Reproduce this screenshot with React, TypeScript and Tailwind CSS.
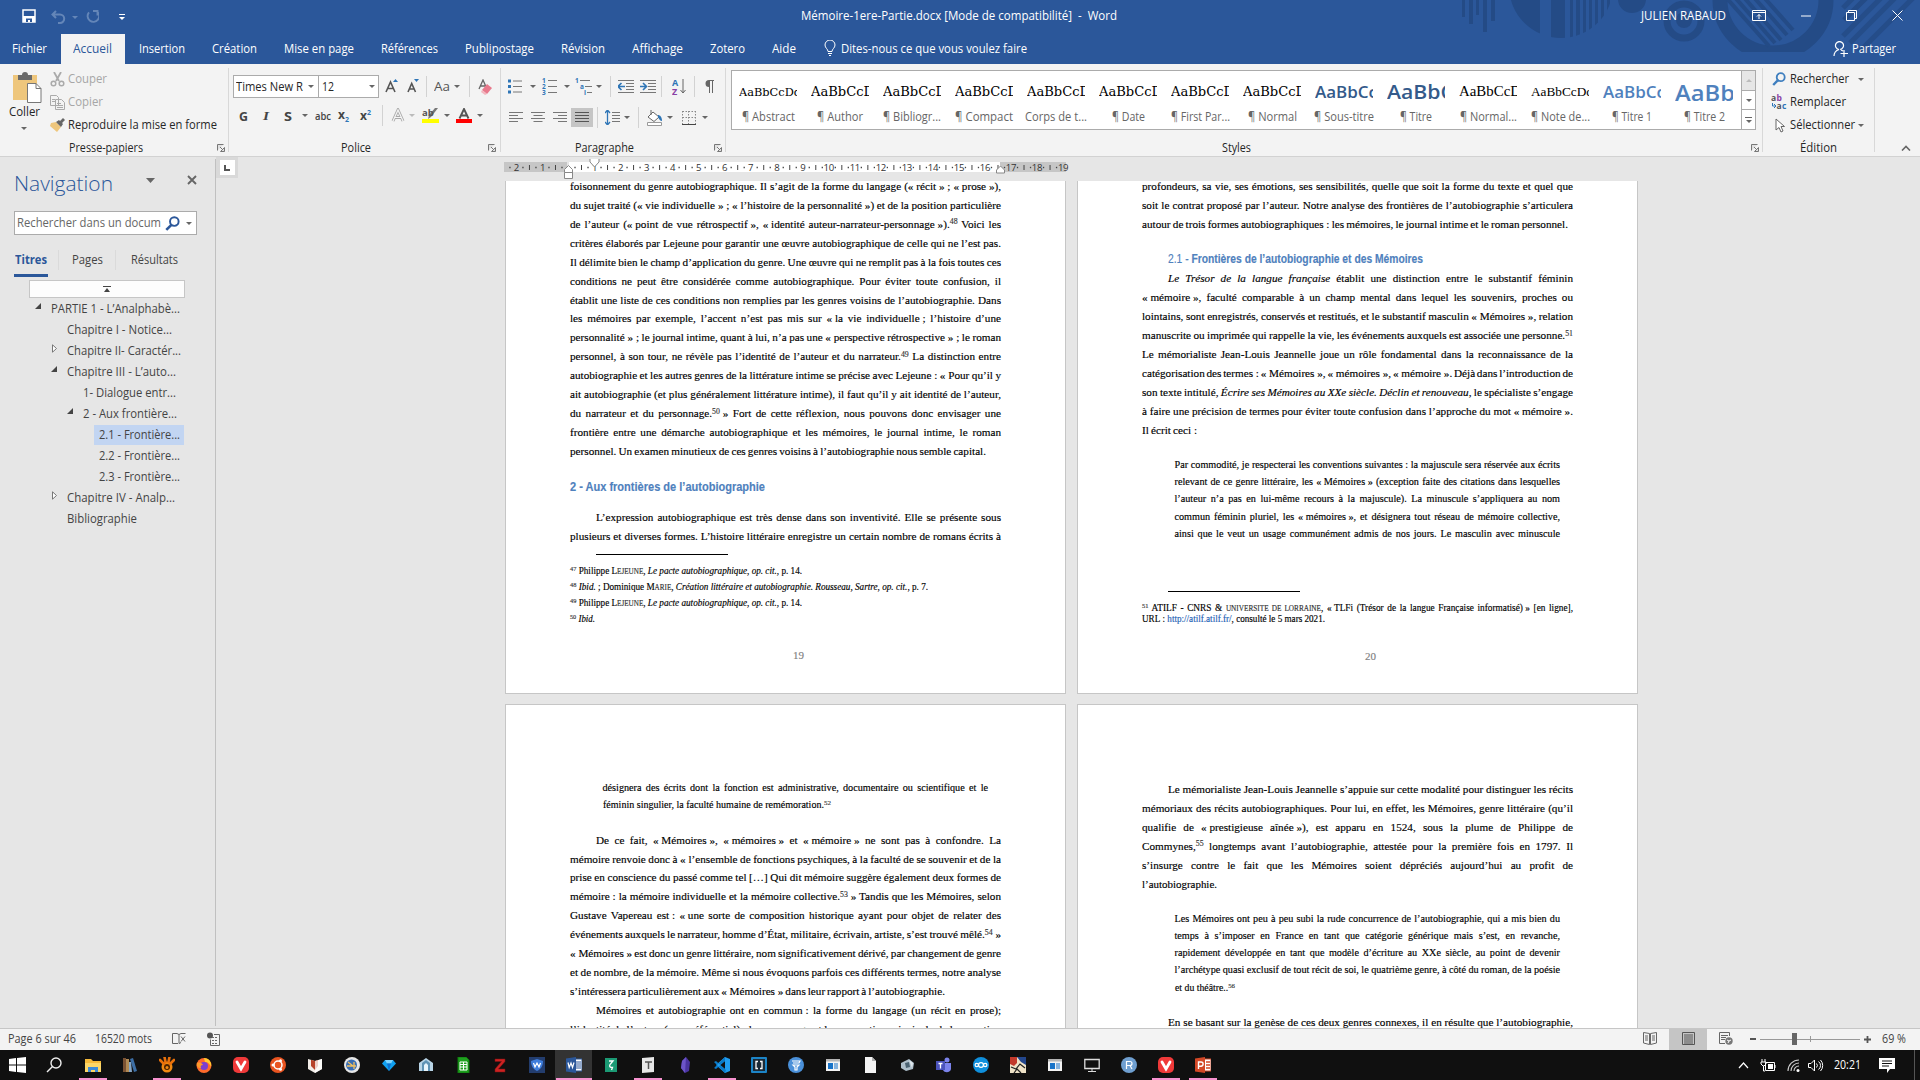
import React, { ReactNode, useLayoutEffect, useRef } from "react";

/* Text run squeezed or stretched to the width given by its box class. */
function Fit({ className = "", children }: { className?: string; children: ReactNode }) {
  const box = useRef<HTMLSpanElement>(null);
  const run = useRef<HTMLSpanElement>(null);
  useLayoutEffect(() => {
    const b = box.current, r = run.current;
    if (!b || !r) return;
    r.style.transform = "none";
    const w = r.getBoundingClientRect().width;
    if (w > 0) r.style.transform = `scaleX(${b.getBoundingClientRect().width / w})`;
  }, []);
  return (
    <span ref={box} className={"block shrink-0 whitespace-nowrap " + className}>
      <span ref={run} className="inline-block origin-left">{children}</span>
    </span>
  );
}

/* Inline marks: *italic*, ^superscript^, {small caps}, [[link]], ~ fixed space. */
function rich(s: string): ReactNode[] {
  return s.split(/(\*[^*]+\*|\^[^^]+\^|\{[^}]+\}|\[\[[^\]]+\]\]|~)/).map((p, i) => {
    if (p === "~") return <span key={i} className="[word-spacing:0px]">{"\u00a0"}</span>;
    if (p.startsWith("[[")) return <span key={i} className="text-[#1f63b5]">{p.slice(2, -2)}</span>;
    if (p[0] === "*" && p.length > 1) return <i key={i}>{rich(p.slice(1, -1))}</i>;
    if (p[0] === "^" && p.length > 1) return <span key={i} className="relative -top-[0.45em] text-[0.7em] leading-none text-[#333]">{p.slice(1, -1)}</span>;
    if (p[0] === "{" && p.length > 1) return <span key={i} className="text-[78%] text-[#333]">{p.slice(1, -1)}</span>;
    return <React.Fragment key={i}>{p}</React.Fragment>;
  });
}

/* Justified line: spare width goes to the spaces between words. */
function Line({ t, className = "" }: { t: string; className?: string }) {
  const box = useRef<HTMLDivElement>(null);
  const run = useRef<HTMLSpanElement>(null);
  useLayoutEffect(() => {
    const b = box.current, r = run.current;
    if (!b || !r) return;
    r.style.wordSpacing = "0px";
    const n = (r.textContent || "").split(" ").length - 1;
    const cs = getComputedStyle(b);
    const free = b.getBoundingClientRect().width - parseFloat(cs.paddingLeft) - r.getBoundingClientRect().width;
    if (n > 0) r.style.wordSpacing = `${free / n}px`;
  }, []);
  return (
    <div ref={box} className={"shrink-0 whitespace-nowrap " + className}>
      <span ref={run}>{rich(t)}</span>
    </div>
  );
}

const B = "h-[18.93px] leading-[18.93px] text-[11.2px]";
const Q = "h-[17.3px] leading-[17.3px] text-[10.2px]";

function Caret({ className = "" }: { className?: string }) {
  return <svg className={"shrink-0 h-[3px] w-[6px] " + className} viewBox="0 0 6 3"><path d="M0 0h6L3 3z" fill="#666" /></svg>;
}
function Sep({ className = "" }: { className?: string }) {
  return <div className={"h-[21px] w-px shrink-0 bg-[#d2d2d2] " + className} />;
}
function Svg({ w, h, className = "", children }: { w: number; h: number; className?: string; children: ReactNode }) {
  return <svg width={w} height={h} viewBox={`0 0 ${w} ${h}`} className={"shrink-0 " + className} fill="none">{children}</svg>;
}
function Launcher({ className = "" }: { className?: string }) {
  return <Svg w={8} h={8} className={className}><path d="M.5 6.500V.5h6M3 3l3 3M7.500 3.500v4h-4z" stroke="#777" fill="#777" fillOpacity=".15" /></Svg>;
}
function Magnifier({ c, s = 14 }: { c: string; s?: number }) {
  return <svg width={s} height={s} viewBox="0 0 14 14" fill="none" className="shrink-0"><circle cx="8.700" cy="5.200" r="4" stroke={c} strokeWidth="1.800" /><path d="M6 8.200L1.200 13" stroke={c} strokeWidth="2.400" /></svg>;
}

function Header() {
  return (
    <div className="relative h-[64px] bg-[#2b579a] text-[12px] text-white">
      <svg className="absolute left-[1455px] top-0" width="465" height="52" viewBox="0 0 465 52" fill="#244b86">
        <path d="M7 0h3v17h-3zM14 0h4v24h-4zM21 0h3v15h-3zM28 0h4v32h-4zM36 0h4v21h-4z" />
        <clipPath id="disc"><circle cx="106" cy="-14" r="52" /></clipPath>
        <g clipPath="url(#disc)"><path d="M54 0h31v52H54zM96 0h14v52H96zM115 0h3v52h-3zM121 0h4v52h-4zM128 0h3v52h-3zM134 0h3v52h-3zM140 0h3v52h-3zM146 0h3v52h-3zM152 0h3v52h-3z" /></g>
        <circle cx="177" cy="-1" r="14" />
        <circle cx="229" cy="21" r="17" fill="none" stroke="#244b86" strokeWidth="7" />
        <circle cx="229" cy="20" r="8" />
        <circle cx="318" cy="0" r="53" fill="none" stroke="#244b86" strokeWidth="15" />
        <g stroke="#244b86" strokeWidth="4"><path d="M268 -6l46 52M277 -6l43 49M286 -6l40 46M296 -6l36 41M306 -6l32 36" /></g>
        <g stroke="#244b86" strokeWidth="5"><path d="M388 36L432 -8M388 8L404 -8M395 43L446 -8M404 52L464 -8" opacity=".8" /><path d="M389 20L417 -8" /></g>
      </svg>
      <div className="relative flex h-[34px] items-center pt-[0px]">
        <Svg w={15} h={15} className="ml-[22px] -mt-[1px]"><path d="M1 1h12v12H1z" stroke="#fff" strokeWidth="1.500" /><path d="M1 7h12v6H1z" fill="#fff" /><path d="M4 9.500h6V13H4z" fill="#2b579a" /><path d="M6 11h2v2H6z" fill="#fff" /></Svg>
        <Svg w={15} h={14} className="ml-[14px] -mt-[1px]"><path d="M5 1L1.500 4.500L5 8M1.500 4.500H9a4.200 4.200 0 010 8.400H7" stroke="#6486b8" strokeWidth="2" /></Svg>
        <svg className="ml-[6px] h-[3px] w-[6px]" viewBox="0 0 6 3"><path d="M0 0h6L3 3z" fill="#6486b8" /></svg>
        <Svg w={14} h={14} className="ml-[7px] -mt-[1px]"><path d="M6 1H1.500v4.500M2 1.500A5.800 5.800 0 1010 2.300" stroke="#6486b8" strokeWidth="1.900" transform="translate(14 0) scale(-1 1)" /></Svg>
        <Svg w={6} h={7} className="ml-[20px]"><path d="M0 .5h6" stroke="#fff" /><path d="M0 3h6L3 6z" fill="#fff" /></Svg>
        <Fit className="ml-[676px] w-[316px] -mt-[2px]">Mémoire-1ere-Partie.docx [Mode de compatibilité]&nbsp; -&nbsp; Word</Fit>
        <Fit className="ml-[524px] w-[85px] -mt-[2px]">JULIEN RABAUD</Fit>
        <Svg w={14} h={11} className="ml-[26px] -mt-[3px]"><path d="M.5.5h13v10H.5zM.5 2.500h13M7 9V4.500M5 6.500l2-2 2 2" stroke="#fff" /></Svg>
        <Svg w={10} h={2} className="ml-[35px] -mt-[3px]"><path d="M0 1h10" stroke="#fff" /></Svg>
        <Svg w={11} h={11} className="ml-[35px] -mt-[3px]"><path d="M.5 2.500h8v8h-8zM2.500 2.500v-2h8v8h-2" stroke="#fff" /></Svg>
        <Svg w={11} h={11} className="ml-[35px] -mt-[3px]"><path d="M.5.5l10 10M10.500.5l-10 10" stroke="#fff" /></Svg>
      </div>
      <div className="relative flex h-[30px] items-center">
        <Fit className="ml-[12px] w-[35px]">Fichier</Fit>
        <div className="ml-[14px] flex h-[30px] w-[64px] items-center bg-[#f3f3f3] pl-[12px] text-[#2b579a]"><Fit className="w-[39px]">Accueil</Fit></div>
        <Fit className="ml-[14px] w-[46px]">Insertion</Fit>
        <Fit className="ml-[27px] w-[45px]">Création</Fit>
        <Fit className="ml-[27px] w-[70px]">Mise en page</Fit>
        <Fit className="ml-[27px] w-[57px]">Références</Fit>
        <Fit className="ml-[27px] w-[69px]">Publipostage</Fit>
        <Fit className="ml-[27px] w-[44px]">Révision</Fit>
        <Fit className="ml-[27px] w-[51px]">Affichage</Fit>
        <Fit className="ml-[27px] w-[35px]">Zotero</Fit>
        <Fit className="ml-[27px] w-[24px]">Aide</Fit>
        <Svg w={12} h={16} className="ml-[28px] -mt-[2px]"><path d="M4 11.500C4 9 1 8 1 5a5 5 0 0110 0c0 3-3 4-3 6.500zM4 13.500h4M5 15.500h2" stroke="#fff" /></Svg>
        <Fit className="ml-[5px] w-[186px]">Dites-nous ce que vous voulez faire</Fit>
        <Svg w={15} h={16} className="ml-[806px]"><path d="M7 8.500a4 4 0 10-1 0C3 9.500 1 12 1 15M8 9l2 1M11 9v7M7.500 12.500H15" stroke="#fff" strokeWidth="1.200" /></Svg>
        <Fit className="ml-[4px] w-[44px]">Partager</Fit>
      </div>
    </div>
  );
}

const TNR = "font-['Liberation_Serif','Times_New_Roman',serif]";
const styles: [string, string, string, string][] = [
  ["AaBbCcDd", "w-[62px] font-['DejaVu_Serif',serif] text-[11.5px] text-black", "¶ Abstract", "w-[53px]"],
  ["AaBbCcD", "w-[63px] font-['DejaVu_Serif',serif] text-[13px] text-black", "¶ Author", "w-[46px]"],
  ["AaBbCcD", "w-[63px] font-['DejaVu_Serif',serif] text-[13px] text-black", "¶ Bibliogr...", "w-[58px]"],
  ["AaBbCcD", "w-[63px] font-['DejaVu_Serif',serif] text-[13px] text-black", "¶ Compact", "w-[58px]"],
  ["AaBbCcD", "w-[63px] font-['DejaVu_Serif',serif] text-[13px] text-black", "Corps de t...", "w-[62px]"],
  ["AaBbCcD", "w-[63px] font-['DejaVu_Serif',serif] text-[13px] text-black", "¶ Date", "w-[33px]"],
  ["AaBbCcD", "w-[63px] font-['DejaVu_Serif',serif] text-[13px] text-black", "¶ First Par...", "w-[59px]"],
  ["AaBbCcD", "w-[63px] font-['DejaVu_Serif',serif] text-[13px] text-black", "¶ Normal", "w-[49px]"],
  ["AaBbCc", "w-[62px] text-[16px] font-semibold text-[#345a8a]", "¶ Sous-titre", "w-[60px]"],
  ["AaBbC", "w-[67px] text-[19px] font-semibold text-[#345a8a]", "¶ Titre", "w-[32px]"],
  ["AaBbCcD", "w-[62px] font-['Liberation_Serif',serif] text-[14px] text-black", "¶ Normal...", "w-[57px]"],
  ["AaBbCcDd", "w-[62px] font-['Liberation_Serif',serif] text-[13px] text-black", "¶ Note de...", "w-[59px]"],
  ["AaBbCc", "w-[62px] text-[17px] font-semibold text-[#4f81bd]", "¶ Titre 1", "w-[40px]"],
  ["AaBbC", "w-[75px] text-[22px] font-semibold text-[#4f81bd]", "¶ Titre 2", "w-[41px]"],
];

function Lines({ d, w = 15 }: { d: string; w?: number }) {
  return <Svg w={w} h={13}><path d={d} stroke="#777" /></Svg>;
}

function Ribbon() {
  return (
    <div className="flex h-[93px] border-b border-[#d2d2d2] bg-[#f3f3f3] pt-[4px] text-[12px] text-[#262626]">
      {/* Clipboard */}
      <div className="flex h-[84px] w-[229px] flex-col border-r border-[#d8d8d8] [&>*]:shrink-0">
        <div className="flex h-[72px]">
          <div className="flex w-[50px] flex-col pl-[9px]">
            <Svg w={30} h={31} className="ml-[4px] mt-[4px]"><path d="M0 3h24v25H0z" fill="#eec67c" /><path d="M5 3h4a3 3 0 016 0h4v5H5z" fill="#6a6a6a" /><path d="M14.500 11.500h8.500l5 5v14H14.500z" fill="#fff" stroke="#777" /><path d="M23 11.500v5h5" stroke="#777" /></Svg>
            <Fit className="mt-[1px] w-[31px]">Coller</Fit>
            <Caret className="ml-[12px] mt-[7px]" />
          </div>
          <div className="flex flex-col">
            <div className="flex h-[22px] items-center text-[#a6a6a6]">
              <Svg w={15} h={15}><path d="M4 0l5 9M11 0L6 9" stroke="#aaa" strokeWidth="1.800" /><circle cx="3.500" cy="11.500" r="2.300" stroke="#aaa" strokeWidth="1.500" /><circle cx="11.500" cy="11.500" r="2.300" stroke="#aaa" strokeWidth="1.500" /></Svg>
              <Fit className="ml-[3px] w-[39px]">Couper</Fit>
            </div>
            <div className="flex h-[24px] items-center text-[#a6a6a6]">
              <Svg w={15} h={15}><path d="M.5.5h6l2 2v8h-8zM5.500 4.500h6l3 3v7h-9zM7 8.500h4M7 10.500h6M7 12.500h6M2 4.500h3M2 6.500h3" stroke="#aaa" fill="#f3f3f3" /></Svg>
              <Fit className="ml-[3px] w-[35px]">Copier</Fit>
            </div>
            <div className="flex h-[22px] items-center">
              <Svg w={15} h={14}><path d="M1 5l5-1 5 5-4 5L0 8z" fill="#eec67c" /><path d="M6 4l3-2 4 4-2 3zM10 3l3-3 2 2-3 3z" fill="#666" /></Svg>
              <Fit className="ml-[3px] w-[149px]">Reproduire la mise en forme</Fit>
            </div>
          </div>
        </div>
        <div className="flex h-[16px] items-center"><Fit className="ml-[69px] w-[74px]">Presse-papiers</Fit><Launcher className="ml-[74px]" /></div>
      </div>
      {/* Font */}
      <div className="flex h-[84px] w-[272px] flex-col border-r border-[#d8d8d8] pl-[4px] pt-[7px] [&>*]:shrink-0">
        <div className="flex h-[23px] items-center">
          <div className="flex h-[23px] w-[86px] items-center border border-[#ababab] bg-white"><Fit className="ml-[2px] w-[67px]">Times New R</Fit><Caret className="ml-[5px]" /></div>
          <div className="-ml-px flex h-[23px] w-[61px] items-center border border-[#ababab] bg-white"><Fit className="ml-[3px] w-[12px]">12</Fit><Caret className="ml-[35px]" /></div>
          <Svg w={14} h={15} className="-mt-[2px] ml-[6px]"><path d="M1 14L5.500 4L10 14M2.500 10.500h6" stroke="#555" strokeWidth="1.600" /><path d="M8 4h5l-2.500-3z" fill="#2e75b6" /></Svg>
          <Svg w={13} h={15} className="-mt-[2px] ml-[8px]"><path d="M1 14L4.700 5.500L8.500 14M2.500 11h4.500" stroke="#555" strokeWidth="1.600" /><path d="M7 1h5L9.500 4z" fill="#2e75b6" /></Svg>
          <Sep className="ml-[6px]" />
          <Fit className="-mt-[1px] ml-[7px] w-[16px] text-[13px] text-[#555]">Aa</Fit><Caret className="ml-[4px]" />
          <Sep className="ml-[9px]" />
          <Svg w={15} h={16} className="ml-[8px]"><path d="M1 10L5 1l4 9M2.500 7h5" stroke="#666" strokeWidth="1.300" /><path d="M9 5l5 4-5 6-5-4z" fill="#e8798c" /><path d="M4 11l5 4-2 1-4-3z" fill="#f3b5be" /></Svg>
        </div>
        <div className="mt-[8px] flex h-[19px] items-center text-[13px] text-[#444]">
          <Fit className="ml-[6px] w-[9px] font-bold">G</Fit>
          <Fit className={"ml-[15px] w-[6px] font-bold italic " + TNR}>I</Fit>
          <Fit className="ml-[15px] w-[8px] font-bold underline">S</Fit>
          <Caret className="ml-[10px]" />
          <Fit className="ml-[7px] w-[16px] text-[11px] font-semibold line-through">abc</Fit>
          <div className="ml-[7px] flex w-[14px] text-[12px] font-bold">x<span className="mt-[8px] text-[7px] leading-[10px] text-[#2e75b6]">2</span></div>
          <div className="ml-[8px] flex w-[14px] text-[12px] font-bold">x<span className="mt-[0px] text-[7px] leading-[10px] text-[#2e75b6]">2</span></div>
          <Sep className="ml-[8px]" />
          <Svg w={14} h={15} className="ml-[8px]"><path d="M2 13L7 2l5 11M4 9.500h6" stroke="#aaa" strokeWidth="3" /><path d="M2 13L7 2l5 11M4 9.500h6" stroke="#f5f5f5" strokeWidth="1.200" /></Svg>
          <svg className="ml-[4px] h-[3px] w-[6px]" viewBox="0 0 6 3"><path d="M0 0h6L3 3z" fill="#bbb" /></svg>
          <div className="ml-[7px] flex w-[17px] flex-col">
            <Svg w={17} h={11}><path d="M16 0L9 9l-3 2 1-4L13 0z" fill="#777" /><text x="0" y="8" fontSize="9.500" fontWeight="700" fill="#555" fontFamily="Open Sans">ab</text></Svg>
            <div className="h-[4px] bg-[#ffff00]" />
          </div>
          <Caret className="ml-[5px]" />
          <div className="ml-[6px] flex w-[16px] flex-col items-center">
            <Svg w={12} h={11}><path d="M1.500 10.500L6 1l4.500 9.500M3 7.500h6" stroke="#555" strokeWidth="1.900" /></Svg>
            <div className="h-[4px] w-[16px] bg-[#ff0000]" />
          </div>
          <Caret className="ml-[5px]" />
        </div>
        <div className="mt-[15px] flex h-[16px] items-center"><Fit className="ml-[108px] w-[30px]">Police</Fit><Launcher className="ml-[117px]" /></div>
      </div>
      {/* Paragraph */}
      <div className="flex h-[84px] w-[225px] flex-col border-r border-[#d8d8d8] pt-[7px] [&>*]:shrink-0">
        <div className="flex h-[23px] items-center">
          <Svg w={14} h={15} className="ml-[7px]"><path d="M0 2h3M0 7.500h3M0 13h3" stroke="#2e75b6" strokeWidth="3" /><path d="M5 2h9M5 7.500h9M5 13h9" stroke="#777" /></Svg><Caret className="ml-[8px]" />
          <Svg w={15} h={17} className="ml-[6px]"><text x="0" y="5" fontSize="6.500" fontWeight="700" fill="#2e75b6">1</text><text x="0" y="11" fontSize="6.500" fontWeight="700" fill="#2e75b6">2</text><text x="0" y="17" fontSize="6.500" fontWeight="700" fill="#2e75b6">3</text><path d="M6 2.500h9M6 8.500h9M6 14.500h9" stroke="#777" /></Svg><Caret className="ml-[7px]" />
          <Svg w={18} h={17} className="ml-[5px]"><text x="0" y="5" fontSize="6.500" fontWeight="700" fill="#2e75b6">1</text><text x="5" y="11" fontSize="6.500" fontWeight="700" fill="#2e75b6">a</text><text x="9" y="17" fontSize="6.500" fontWeight="700" fill="#2e75b6">i</text><path d="M5 2.500h10M10 8.500h7M12 14.500h5" stroke="#777" /></Svg><Caret className="ml-[3px]" />
          <Sep className="ml-[8px]" />
          <Svg w={16} h={13} className="ml-[7px]"><path d="M0 .5h16M8 3.500h8M8 6.500h8M8 9.500h8M0 12.500h16" stroke="#777" /><path d="M0 6.500h7M3.500 3L0 6.500 3.500 10" stroke="#2e75b6" strokeWidth="1.600" /></Svg>
          <Svg w={16} h={13} className="ml-[6px]"><path d="M0 .5h16M8 3.500h8M8 6.500h8M8 9.500h8M0 12.500h16" stroke="#777" /><path d="M0 6.500h6M3 3l3.500 3.500L3 10" stroke="#2e75b6" strokeWidth="1.600" /></Svg>
          <Sep className="ml-[5px]" />
          <Svg w={15} h={17} className="ml-[10px]"><text x="0" y="8" fontSize="9" fontWeight="700" fill="#2e75b6">A</text><text x="0" y="16.500" fontSize="9" fontWeight="700" fill="#8a3fa5">Z</text><path d="M11 1v14M8.500 12l2.500 3 2.500-3" stroke="#666" /></Svg>
          <Sep className="ml-[7px]" />
          <Svg w={10} h={13} className="ml-[9px]"><path d="M5 0h5v1H5zM5 0v7a3.500 3.500 0 010-7z" fill="#666" /><path d="M5.500 0v13M8.500 0v13" stroke="#666" /></Svg>
        </div>
        <div className="mt-[9px] flex h-[21px] items-center pl-[8px]">
          <Lines d="M0 1.500h14M0 4.500h9M0 7.500h14M0 10.500h9" />
          <div className="w-[7px]" /><Lines d="M0 1.500h14M2.500 4.500h9M0 7.500h14M2.500 10.500h9" />
          <div className="w-[7px]" /><Lines d="M0 1.500h14M5 4.500h9M0 7.500h14M5 10.500h9" />
          <div className="ml-[3px] flex h-[19px] w-[22px] items-center justify-center bg-[#c5c5c5]"><Svg w={14} h={13}><path d="M0 1.500h14M0 4.500h14M0 7.500h14M0 10.500h14" stroke="#555" /></Svg></div>
          <Sep className="ml-[4px]" />
          <Svg w={15} h={15} className="ml-[7px]"><path d="M2.500 0v15M0 3l2.500-3L5 3M0 12l2.500 3L5 12" stroke="#2e75b6" strokeWidth="1.300" /><path d="M7 2.500h8M7 5.500h8M7 8.500h8M7 11.500h8" stroke="#777" /></Svg><Caret className="ml-[4px]" />
          <Sep className="ml-[8px]" />
          <Svg w={17} h={16} className="ml-[7px]"><path d="M2 7l5-5 6 5-5 4.500zM5 5V0" stroke="#666" fill="#fff" /><path d="M12 5c2 0 4 2 4 6-2 0-3-2-4-4z" fill="#2e75b6" /><path d="M1.500 12.500h14v3h-14z" stroke="#999" fill="#fff" /></Svg><Caret className="ml-[4px]" />
          <Svg w={14} h={14} className="ml-[9px]"><path d="M.5.5h13M.5 6.500h13M.5 0v13M6.500 0v13M13.500 0v13" stroke="#888" strokeDasharray="1.500 1.500" /><path d="M0 13.500h14" stroke="#444" /></Svg><Caret className="ml-[6px]" />
        </div>
        <div className="mt-[12px] flex h-[16px] items-center"><Fit className="ml-[74px] w-[59px]">Paragraphe</Fit><Launcher className="ml-[80px]" /></div>
      </div>
      {/* Styles */}
      <div className="flex h-[84px] w-[1037px] flex-col border-r border-[#d8d8d8] pl-[5px] pt-[2px] [&>*]:shrink-0">
        <div className="flex h-[60px] w-[1025px] border border-[#ababab] bg-white">
          <div className="flex w-[1009px]">
            {styles.map(([sample, sc, label, lc], i) => (
              <div key={i} className="flex w-[72.01px] shrink-0 flex-col items-center pt-[7px]">
                <div className="flex h-[28px] w-[58px] items-center overflow-hidden"><Fit className={sc}>{sample}</Fit></div>
                <Fit className={"mt-[3px] text-[#666] " + lc}>{label}</Fit>
              </div>
            ))}
          </div>
          <div className="flex w-[14px] flex-col border-l border-[#ababab]">
            <div className="flex h-[20px] items-center justify-center border-b border-[#ababab] bg-[#e6e6e6]"><svg className="h-[3px] w-[6px] rotate-180" viewBox="0 0 6 3"><path d="M0 0h6L3 3z" fill="#bbb" /></svg></div>
            <div className="flex h-[19px] items-center justify-center border-b border-[#ababab]"><Caret /></div>
            <div className="flex h-[19px] flex-col items-center justify-center gap-[2px]"><div className="h-px w-[7px] bg-[#666]" /><Caret /></div>
          </div>
        </div>
        <div className="mt-[10px] flex h-[16px] items-center"><Fit className="ml-[491px] w-[29px]">Styles</Fit><Launcher className="ml-[500px]" /></div>
      </div>
      {/* Editing */}
      <div className="flex h-[84px] w-[112px] flex-col border-r border-[#d8d8d8] [&>*]:shrink-0">
        <div className="flex h-[22px] items-center pl-[9px]"><Magnifier c="#3f7fbf" /><Fit className="ml-[4px] w-[59px]">Rechercher</Fit><Caret className="ml-[9px]" /></div>
        <div className="flex h-[24px] items-center pl-[8px]">
          <Svg w={16} h={16}><text x="0" y="6.500" fontSize="8.500" fontWeight="700" fill="#555">a</text><text x="5.500" y="6.500" fontSize="8.500" fontWeight="700" fill="#8a3fa5">b</text><text x="5.500" y="15" fontSize="8.500" fontWeight="700" fill="#555">a</text><text x="11" y="15" fontSize="8.500" fontWeight="700" fill="#2e75b6">c</text><path d="M1.500 9v3h3M3 10l2 2-2 2" stroke="#2e75b6" /></Svg>
          <Fit className="ml-[3px] w-[56px]">Remplacer</Fit>
        </div>
        <div className="flex h-[22px] items-center pl-[12px]"><Svg w={10} h={15}><path d="M1 1v11l3-2.500 2 4.500 2-1-2-4.500h3.500z" stroke="#666" fill="#fff" /></Svg><Fit className="ml-[5px] w-[65px]">Sélectionner</Fit><Caret className="ml-[3px]" /></div>
        <div className="mt-[4px] flex h-[16px] items-center"><Fit className="ml-[37px] w-[37px]">Édition</Fit></div>
      </div>
      <Svg w={10} h={6} className="ml-[26px] mt-[77px]"><path d="M1 5.500l4-4 4 4" stroke="#666" strokeWidth="1.600" /></Svg>
    </div>
  );
}

const tree: [string, string, string, string][] = [
  ["open", "pl-[35px]", "w-[129px]", "PARTIE 1 - L’Analphabè..."],
  ["", "pl-[51px]", "w-[105px]", "Chapitre I - Notice..."],
  ["closed", "pl-[51px]", "w-[114px]", "Chapitre II- Caractér..."],
  ["open", "pl-[51px]", "w-[109px]", "Chapitre III - L’auto..."],
  ["", "pl-[67px]", "w-[93px]", "1- Dialogue entr..."],
  ["open", "pl-[67px]", "w-[94px]", "2 - Aux frontière..."],
  ["sel", "pl-[83px]", "w-[81px]", "2.1 - Frontière..."],
  ["", "pl-[83px]", "w-[81px]", "2.2 - Frontière..."],
  ["", "pl-[83px]", "w-[81px]", "2.3 - Frontière..."],
  ["closed", "pl-[51px]", "w-[108px]", "Chapitre IV - Analp..."],
  ["", "pl-[51px]", "w-[70px]", "Bibliographie"],
];

function Navigation() {
  return (
    <div className="mt-[2px] flex h-[867px] w-[216px] shrink-0 flex-col border-r border-[#c0c0c0] text-[12px] text-[#444]">
      <div className="flex h-[48px] items-center">
        <Fit className="ml-[14px] w-[99px] text-[21px] font-light text-[#2b579a]">Navigation</Fit>
        <svg className="-mt-[6px] ml-[33px] h-[5px] w-[9px]" viewBox="0 0 9 5"><path d="M0 0h9L4.500 5z" fill="#666" /></svg>
        <Svg w={10} h={10} className="-mt-[6px] ml-[32px]"><path d="M1 1l8 8M9 1L1 9" stroke="#666" strokeWidth="1.900" /></Svg>
      </div>
      <div className="ml-[14px] mt-[4px] flex h-[24px] w-[183px] items-center border border-[#ababab] bg-white text-[#666]">
        <Fit className="ml-[2px] w-[144px]">Rechercher dans un docum</Fit>
        <div className="ml-[4px]"><Magnifier c="#2b579a" s={15} /></div><Caret className="ml-[6px]" />
      </div>
      <div className="mt-[13px] flex h-[24px] items-center">
        <Fit className="ml-[15px] w-[32px] font-bold text-[#2b579a]">Titres</Fit>
        <div className="ml-[11px] h-[20px] w-px bg-[#dadada]" />
        <Fit className="ml-[13px] w-[31px]">Pages</Fit>
        <div className="ml-[12px] h-[20px] w-px bg-[#dadada]" />
        <Fit className="ml-[15px] w-[47px]">Résultats</Fit>
      </div>
      <div className="ml-[14px] mt-[2px] h-[3px] w-[34px] bg-[#2b579a]" />
      <div className="ml-[29px] mt-[3px] flex h-[18px] w-[156px] items-center justify-center border border-[#c6c6c6] bg-[#fdfdfd]">
        <Svg w={8} h={6}><path d="M0 .5h8" stroke="#444" /><path d="M1 6L4 2l3 4z" fill="#444" /></Svg>
      </div>
      <div className="flex flex-col">
        {tree.map(([k, pl, w, t]) => (
          <div key={t} className={"flex h-[21px] items-center " + pl}>
            {k === "open" && <Svg w={7} h={7} className="-mt-[4px]"><path d="M6 0v6H0z" fill="#444" /></Svg>}
            {k === "closed" && <Svg w={7} h={9} className="-mt-[4px]"><path d="M1.500.8v7.400L5.500 4.500z" stroke="#777" fill="#fff" /></Svg>}
            {(k === "" || k === "sel") && <div className="w-[7px]" />}
            {k === "sel" ? <div className="ml-[4px] flex h-[20px] w-[90px] items-center bg-[#c2d5f2] pl-[5px]"><Fit className={w}>{t}</Fit></div> : <Fit className={"ml-[9px] " + w}>{t}</Fit>}
          </div>
        ))}
      </div>
    </div>
  );
}

function Ruler() {
  const p = 26.03, zero = 64.5;
  const nums = [-2, -1, ...Array.from({ length: 19 }, (_, i) => i + 1)];
  const marks = Array.from({ length: 85 }, (_, i) => i - 9);
  return (
    <svg className="ml-[504px] mt-[2px] block" width="566" height="22" viewBox="0 0 566 22">
      <path d="M0 3h63v10H0zM496 3h66v10h-66z" fill="#c6c6c6" /><path d="M65 3h431v10H65z" fill="#fff" />
      {marks.map((q) => {
        const x = zero + (q * p) / 4;
        if (q % 4 === 0 || x < 0 || x > 554) return null;
        return q % 2 === 0 ? <path key={q} d={`M${x} 6v5`} stroke="#444" /> : <path key={q} d={`M${x} 7.800v1.400`} stroke="#444" strokeWidth="1.300" />;
      })}
      {nums.map((n) => <text key={n} x={zero + n * p} y="12" textAnchor="middle" fontSize="9.600" letterSpacing="-.3" fill="#333" fontFamily="Open Sans">{Math.abs(n)}</text>)}
      <path d="M86 -1h9v4l-4.500 5L86 3z" fill="#fff" stroke="#888" />
      <path d="M60.500 13.500v-3l4-4 4 4v9h-8zM60.500 13.500h8M492.500 14v-3l4-4 4 4v3z" fill="#fff" stroke="#888" />
    </svg>
  );
}

function Page({ top = false, children }: { top?: boolean; children: ReactNode }) {
  return (
    <div className={"w-[561px] shrink-0 overflow-hidden border-x border-[#c6c6c6] bg-white text-black [-webkit-text-stroke:0.15px] " + TNR + (top ? " h-[513px] border-b" : " h-[325px] border-t")}>
      <div className="ml-[64px] flex w-[431px] flex-col">{children}</div>
    </div>
  );
}

function Body({ lines, className = "" }: { lines: string[]; className?: string }) {
  return <div className={"flex flex-col " + className}>{lines.map((t, i) => <Line key={i} t={t} className={B} />)}</div>;
}
function Quote({ lines, className = "" }: { lines: string[]; className?: string }) {
  return <div className={"ml-[32.5px] flex w-[385.5px] flex-col " + className}>{lines.map((t, i) => <Line key={i} t={t} className={Q} />)}</div>;
}

function Documents() {
  return (
    <div className="flex h-[847px] flex-col gap-[10px] overflow-hidden pl-[289px]">
      <div className="flex gap-[11px]">
        <Page top>
          <Body className="-mt-[4px]" lines={[
            "foisonnement du genre autobiographique. Il s’agit de la forme du langage («~récit~»~; «~prose~»),",
            "du sujet traité («~vie individuelle~»~; «~l’histoire de la personnalité~») et de la position particulière",
            "de l’auteur («~point de vue rétrospectif~», «~identité auteur-narrateur-personnage~»).^48^ Voici les",
            "critères élaborés par Lejeune pour garantir une œuvre autobiographique de celle qui ne l’est pas.",
            "Il délimite bien le champ d’application du genre. Une œuvre qui ne remplit pas à la fois toutes ces",
            "conditions ne peut être considérée comme autobiographique. Pour éviter toute confusion, il",
            "établit une liste de ces conditions non remplies par les genres voisins de l’autobiographie. Dans",
            "les mémoires par exemple, l’accent n’est pas mis sur «~la vie individuelle~; l’histoire d’une",
            "personnalité~»~; le journal intime, quant à lui, n’a pas une «~perspective rétrospective~»~; le roman",
            "personnel, à son tour, ne révèle pas l’identité de l’auteur et du narrateur.^49^ La distinction entre",
            "autobiographie et les autres genres de la littérature intime se précise avec Lejeune~: «~Pour qu’il y",
            "ait autobiographie (et plus généralement littérature intime), il faut qu’il y ait identité de l’auteur,",
            "du narrateur et du personnage.^50^~» Fort de cette réflexion, nous pouvons donc envisager une",
            "frontière entre une démarche autobiographique et les mémoires, le journal intime, le roman",
          ]} />
          <Line t="personnel. Un examen minutieux de ces genres voisins à l’autobiographie nous semble capital." className={B + " w-[416px]"} />
          <div className="mt-[17px] h-[18px] font-['Liberation_Sans',Arial,sans-serif] text-[12px] font-bold leading-[18px] text-[#4f81bd]"><Fit className="w-[195px]">2 - Aux frontières de l’autobiographie</Fit></div>
          <Line t="L’expression autobiographique est très dense dans son inventivité. Elle se présente sous" className={B + " mt-[12px] pl-[26px]"} />
          <Line t="plusieurs et diverses formes. L’histoire littéraire enregistre un certain nombre de romans écrits à" className={B} />
          <div className="ml-[26px] mt-[8px] h-px w-[132px] bg-black" />
          <div className="mt-[8px] flex flex-col text-[9.5px] leading-[16px]">
            <Fit className="h-[16px] w-[232px]">{rich("^47^ Philippe L{EJEUNE}, *Le pacte autobiographique*, *op. cit.*, p. 14.")}</Fit>
            <Fit className="h-[16px] w-[358px]">{rich("^48^ *Ibid.* ; Dominique M{ARIE}, *Création littéraire et autobiographie. Rousseau, Sartre*, *op. cit.*, p. 7.")}</Fit>
            <Fit className="h-[16px] w-[232px]">{rich("^49^ Philippe L{EJEUNE}, *Le pacte autobiographique*, *op. cit.*, p. 14.")}</Fit>
            <Fit className="h-[16px] w-[25px]">{rich("^50^ *Ibid.*")}</Fit>
          </div>
          <div className="ml-[223px] mt-[19px] text-[11px] leading-[18px] text-[#7f7f7f]">19</div>
        </Page>
        <Page top>
          <Body className="-mt-[4px]" lines={[
            "profondeurs, sa vie, ses émotions, ses sensibilités, quelle que soit la forme du texte et quel que",
            "soit le contrat proposé par l’auteur. Notre analyse des frontières de l’autobiographie s’articulera",
          ]} />
          <Line t="autour de trois formes autobiographiques~: les mémoires, le journal intime et le roman personnel." className={B + " w-[426px]"} />
          <div className="mt-[16px] h-[18px] pl-[26px] font-['Liberation_Sans',Arial,sans-serif] text-[12px] leading-[18px] text-[#4f81bd]"><Fit className="w-[255px]">2.1 - <b>Frontières de l’autobiographie et des Mémoires</b></Fit></div>
          <Line t="*Le Trésor de la langue française* établit une distinction entre le substantif féminin" className={B + " mt-[1.7px] pl-[26px]"} />
          <Body lines={[
            "«~mémoire~», faculté comparable à un champ mental dans lequel les souvenirs, proches ou",
            "lointains, sont enregistrés, conservés et restitués, et le substantif masculin «~Mémoires~», relation",
            "manuscrite ou imprimée qui rappelle la vie, les événements auxquels est associée une personne.^51^",
            "Le mémorialiste Jean-Louis Jeannelle joue un rôle fondamental dans la reconnaissance de la",
            "catégorisation des termes~: «~Mémoires~», «~mémoires~», «~mémoire~». Déjà dans l’introduction de",
            "son texte intitulé, *Écrire ses Mémoires au XXe siècle. Déclin et renouveau*, le spécialiste s’engage",
            "à faire une précision de termes pour éviter toute confusion dans l’approche du mot «~mémoire~».",
          ]} />
          <Line t="Il écrit ceci~:" className={B + " w-[55px]"} />
          <Quote className="mt-[16px]" lines={[
            "Par commodité, je respecterai les conventions suivantes~: la majuscule sera réservée aux écrits",
            "relevant de ce genre littéraire, les «~Mémoires~» (exception faite des citations dans lesquelles",
            "l’auteur n’a pas en lui-même recours à la majuscule). La minuscule s’appliquera au nom",
            "commun féminin pluriel, les «~mémoires~», et désignera tout réseau de mémoire collective,",
            "ainsi que le veut un usage communément admis de nos jours. Le masculin avec minuscule",
          ]} />
          <div className="ml-[26px] mt-[48.3px] h-px w-[132px] bg-black" />
          <Line t="^51^ ATILF - CNRS & {UNIVERSITE DE LORRAINE}, «~TLFi (Trésor de la langue Française informatisé)~» [en ligne]," className="mt-[11px] h-[11px] text-[9.3px] leading-[11px]" />
          <Fit className="h-[11px] w-[183px] text-[9.3px] leading-[11px]">{rich("URL~: [[http://atilf.atilf.fr/]], consulté le 5 mars 2021.")}</Fit>
          <div className="ml-[223px] mt-[22px] text-[11px] leading-[18px] text-[#7f7f7f]">20</div>
        </Page>
      </div>
      <div className="flex gap-[11px]">
        <Page>
          <Quote className="mt-[74px]" lines={["désignera des écrits dont la fonction est administrative, documentaire ou scientifique et le"]} />
          <Fit className={"ml-[32.5px] w-[228px] " + Q}>{rich("féminin singulier, la faculté humaine de remémoration.^52^")}</Fit>
          <Line t="De ce fait, «~Mémoires~», «~mémoires~» et «~mémoire~» ne sont pas à confondre. La" className={B + " mt-[17px] pl-[26px]"} />
          <Body lines={[
            "mémoire renvoie donc à «~l’ensemble de fonctions psychiques, à la faculté de se souvenir et de la",
            "prise en conscience du passé comme tel […] Qui dit mémoire suggère également deux formes de",
            "mémoire~: la mémoire individuelle et la mémoire collective.^53^~» Tandis que les Mémoires, selon",
            "Gustave Vapereau est~: «~une sorte de composition historique ayant pour objet de relater des",
            "événements auxquels le narrateur, homme d’État, militaire, écrivain, artiste, s’est trouvé mêlé.^54^~»",
            "«~Mémoires~» est donc un genre littéraire, nom significativement dérivé, par changement de genre",
            "et de nombre, de la mémoire. Même si nous évoquons parfois ces différents termes, notre analyse",
          ]} />
          <Line t="s’intéressera particulièrement aux «~Mémoires~» dans leur rapport à l’autobiographie." className={B + " w-[375px]"} />
          <Line t="Mémoires et autobiographie ont en commun~: la forme du langage (un récit en prose);" className={B + " pl-[26px]"} />
          <Line t="l’identité de l’auteur (nom référentiel) ; le personnage et la perspective principale de la narration" className={B} />
        </Page>
        <Page>
          <Line t="Le mémorialiste Jean-Louis Jeannelle s’appuie sur cette modalité pour distinguer les récits" className={B + " mt-[75px] pl-[26px]"} />
          <Body lines={[
            "mémoriaux des récits autobiographiques. Pour lui, en effet, les Mémoires, genre littéraire (qu’il",
            "qualifie de «~prestigieuse aînée~»), est apparu en 1524, sous la plume de Philippe de",
            "Commynes,^55^ longtemps avant l’autobiographie, attestée pour la première fois en 1797. Il",
            "s’insurge contre le fait que les Mémoires soient dépréciés aujourd’hui au profit de",
          ]} />
          <Fit className={B + " w-[75px]"}>l’autobiographie.</Fit>
          <Quote className="mt-[16px]" lines={[
            "Les Mémoires ont peu à peu subi la rude concurrence de l’autobiographie, qui a mis bien du",
            "temps à s’imposer en France en tant que catégorie générique mais s’est, en revanche,",
            "rapidement développée en tant que modèle d’écriture au XXe siècle, au point de devenir",
            "l’archétype quasi exclusif de tout récit de soi, le quatrième genre, à côté du roman, de la poésie",
          ]} />
          <Fit className={"ml-[32.5px] w-[60px] " + Q}>{rich("et du théâtre..^56^")}</Fit>
          <Line t="En se basant sur la genèse de ces deux genres connexes, il en résulte que l’autobiographie," className={B + " mt-[17px] pl-[26px]"} />
        </Page>
      </div>
    </div>
  );
}

function StatusBar() {
  return (
    <div className="flex h-[22px] items-center border-t border-[#c6c6c6] bg-[#f3f3f3] text-[12px] text-[#444]">
      <Fit className="-mt-[2px] ml-[8px] w-[68px]">Page 6 sur 46</Fit>
      <Fit className="-mt-[2px] ml-[19px] w-[57px]">16520 mots</Fit>
      <Svg w={14} h={13} className="-mt-[2px] ml-[20px]"><path d="M6 11.500H.5V1.500H5l2 1v9l2-1M7 2.500l2-1h4.500M9 4.500l4 5M13 4.500l-4 5" stroke="#666" /></Svg>
      <Svg w={13} h={14} className="-mt-[2px] ml-[21px]"><circle cx="3" cy="3.500" r="3" fill="#555" /><path d="M7 2.500h5.500v11h-9v-6" stroke="#666" /><path d="M5 5.500h6M5 8.500h6M5 11.500h6" stroke="#666" strokeDasharray="2 1" /></Svg>
      <Svg w={14} h={13} className="-mt-[2px] ml-[1423px]"><path d="M.5.5l6 1v11l-6-1.500zM13.500.5l-6 1v11l6-1.500zM2 4h3M2 6h3M2 8h3M9 4h3M9 6h3M9 8h3" stroke="#666" /></Svg>
      <div className="ml-[12px] flex h-[21px] w-[38px] items-center justify-center bg-[#c5c5c5]"><Svg w={13} h={13} className="-mt-[2px]"><path d="M.5.5h12v12H.5zM2 3h9M2 5h9M2 7h9M2 9h9M2 11h9" stroke="#555" /></Svg></div>
      <Svg w={14} h={13} className="-mt-[2px] ml-[12px]"><path d="M6 11.500H.5V.5h10V4M2 3.500h7M2 5.500h5M2 7.500h4" stroke="#666" /><circle cx="10" cy="9" r="3.700" fill="#777" /><path d="M8 8l2 1 2-1M9 11l1-2" stroke="#fff" /></Svg>
      <div className="-mt-[1px] ml-[17px] h-[2px] w-[6px] bg-[#555]" />
      <Svg w={100} h={12} className="-mt-[2px] ml-[4px]"><path d="M0 6.500h100M50.500 3v6" stroke="#999" /><path d="M32 0h5v12h-5z" fill="#666" /></Svg>
      <Svg w={7} h={7} className="-mt-[1px] ml-[4px]"><path d="M0 3.500h7M3.500 0v7" stroke="#555" strokeWidth="1.800" /></Svg>
      <Fit className="-mt-[2px] ml-[11px] w-[24px]">69 %</Fit>
    </div>
  );
}

function AppIcon({ k }: { k: string }) {
  const art: Record<string, ReactNode> = {
    folder: <><path d="M0 2h6l2 2h8v11H0z" fill="#f5b93a" /><path d="M0 6h16v9H0z" fill="#fdd667" /><path d="M3 15v-5h10v5h-3v-2H6v2z" fill="#3c8ad8" /></>,
    books: <><path d="M1 1h3v14H1z" fill="#7b5233" /><path d="M4 2h3v13H4z" fill="#b08a55" /><path d="M8 2l3-1 4 13-3 1z" fill="#3c6ea5" /><path d="M7 5h2l1 10H7z" fill="#86a6c6" /></>,
    paw: <><circle cx="8" cy="10" r="5.500" fill="#f08a12" /><path d="M1 3l4 4M5.500 0l1 5M10.500 0l-1 5M15 3l-4 4" stroke="#e8700a" strokeWidth="2.600" strokeLinecap="round" /><path d="M5 10c0-4 6-4 6 0 0 2-1 3-3 3s-3-1-3-3z" fill="#4a2200" /><circle cx="8" cy="10.500" r="1.500" fill="#f08a12" /></>,
    firefox: <><circle cx="8" cy="8.500" r="7.500" fill="#ff6a2b" /><path d="M8 1c5 0 8 4 7 9-1-3-3-5-6-5z" fill="#ffcb2e" /><circle cx="8" cy="9" r="4" fill="#7a3fd0" /><path d="M1 6c3-1 5 0 6 2-2 0-3 1-2 3-3 0-5-2-4-5z" fill="#ff9a2b" /></>,
    vivaldi: <><rect width="16" height="16" rx="5" fill="#ef3939" /><path d="M4 5l4 7 4-7" stroke="#fff" strokeWidth="2.800" strokeLinecap="round" /></>,
    ubuntu: <><circle cx="8" cy="8" r="8" fill="#e95420" /><circle cx="8" cy="8" r="4" stroke="#fff" strokeWidth="1.500" /><circle cx="3" cy="8" r="1.500" fill="#fff" /><circle cx="10.500" cy="3.700" r="1.500" fill="#fff" /><circle cx="10.500" cy="12.300" r="1.500" fill="#fff" /></>,
    mdoc: <><path d="M1 2l7 2 7-2v10l-7 4-7-4z" fill="#f2ede8" /><path d="M4 2.800l4 1.200 3-1v6l-3 4-4-4z" fill="#b8432a" /><path d="M8 4l7-2v10l-7 4z" fill="#fff" fillOpacity=".75" /></>,
    owl: <><circle cx="8" cy="8" r="8" fill="#e6e6e6" /><circle cx="7.500" cy="8" r="5.500" fill="#386db4" /><path d="M4 5l5 4M3 9h9M10 5v7" stroke="#f0c060" strokeWidth="1.300" /></>,
    gem: <><path d="M4 3h8l3 3.500L8 14 1 6.500z" fill="#10a0f0" /><path d="M4 3h8l-2 3.500H6z" fill="#7fd4ff" /><path d="M6 6.500h4L8 14z" fill="#0b70d0" /></>,
    house: <><path d="M8 1l7 5v8H1V6z" fill="#b8d4e6" /><path d="M8 3l4 3v8H4V6z" fill="#5f93b5" /><path d="M8 6l2 2v6H6V8z" fill="#e8f4fb" /></>,
    calc: <><path d="M3 0h8l3 3v13H3z" fill="#1fa01f" stroke="#0f7a0f" /><path d="M5 5h7v8H5zM5 7.500h7M5 10h7M8.500 5v8" stroke="#fff" /></>,
    zred: <path d="M3 2h10v2.500L6.500 12H13v3H3v-3l6.500-7.500H3z" fill="#cc2222" stroke="#7e1010" strokeWidth=".5" />,
    shield: <><path d="M0 0h16v16H0z" fill="#233d6e" /><path d="M8 2l6 2c0 5-2 8-6 10C4 12 2 9 2 4z" fill="#3e7ddb" /><path d="M4.500 6l1.500 4 2-4 2 4 1.500-4" stroke="#fff" strokeWidth="1.200" /></>,
    word: <><path d="M8 2h8v12H8z" fill="#fff" stroke="#2b579a" /><path d="M10 5h5M10 7h5M10 9h5M10 11h5" stroke="#2b579a" /><path d="M0 1.500L10 0v16L0 14.500z" fill="#2b579a" /><path d="M2 5.500l1.200 5L5 6l1.500 4.500L8 5.500" stroke="#fff" strokeWidth="1.200" /></>,
    zeta: <><path d="M2 1h12v14H2z" fill="#1b9a74" /><path d="M6 4h4L7 7.500c-1 2 0 3 2.500 3L8.500 13" stroke="#fff" strokeWidth="1.300" /></>,
    tdoc: <><path d="M2 1l12-1v15l-12 1z" fill="#e8e8e8" /><path d="M5 5h7M8.500 5v7" stroke="#555" strokeWidth="1.500" /></>,
    crystal: <><path d="M9 0l4 5-1 9-4 2-4-5 1-7z" fill="#4a34a0" /><path d="M9 0l-1 16-4-5 1-7z" fill="#6c54c8" /></>,
    code: <><path d="M11 0l5 2v12l-5 2L2 8z" fill="#1f9cf0" /><path d="M11 4v8L6 8z" fill="#101010" /><path d="M0 5l2-1 10 9-1 3zM0 11l2 1L11 4V0z" fill="#0a7ac8" /></>,
    brackets: <><rect width="16" height="16" rx="1" fill="#1c84c6" /><path d="M2 2h12v12H2z" fill="#1b2a36" /><path d="M7 4.500H5v7h2M9 4.500h2v7H9" stroke="#fff" strokeWidth="1.300" /></>,
    funnel: <><circle cx="8" cy="8" r="8" fill="#4a90d9" /><path d="M4 4h8l-1 2H5M5 8h6l-2 2v3H7v-3z" stroke="#fff" strokeWidth="1.200" /></>,
    win: <><path d="M1 2h14v12H1z" fill="#f4f4f4" /><path d="M1 2h14v2.500H1z" fill="#b5b5b5" /><path d="M3 6h5v6H3z" fill="#1873c8" /><path d="M9 7h4M9 9h4M9 11h4" stroke="#1873c8" /></>,
    doc: <><path d="M3 0h7l4 4v12H3z" fill="#f4f4f4" /><path d="M10 0v4h4z" fill="#b0b0b0" /></>,
    cam: <><path d="M2 6l8-4 5 4-1 6-7 2-5-3z" fill="#aebfcb" /><path d="M6 6l4-1 1 5-4 1z" fill="#4a6272" /><path d="M10 3l4 3-1 5z" fill="#dfe8ec" /></>,
    teams: <><circle cx="11" cy="3" r="2.500" fill="#7b83eb" /><path d="M7 6h8v6c0 3-6 5-8 1z" fill="#7b83eb" /><path d="M0 4h9v9H0z" fill="#4b53bc" /><path d="M2.500 6.500h4M4.500 6.500v5" stroke="#fff" strokeWidth="1.300" /></>,
    cloud: <><circle cx="8" cy="8" r="8" fill="#0f8fdc" /><circle cx="3.800" cy="8" r="1.700" stroke="#fff" strokeWidth="1.200" /><circle cx="8" cy="8" r="2.400" stroke="#fff" strokeWidth="1.200" /><circle cx="12.200" cy="8" r="1.700" stroke="#fff" strokeWidth="1.200" /></>,
    mask: <><path d="M0 0h16v16H0z" fill="#efe3c8" /><path d="M0 0h7v6l-3 3-4-2z" fill="#c2392b" /><path d="M7 0h9v8l-5-3z" fill="#23468c" /><path d="M1 10l5 2 4-5 5 4M4 16l3-4 4 4" stroke="#222" strokeWidth="1.200" /></>,
    monitor: <><path d="M.8 2.500h14.400v9H.8z" stroke="#ddd" strokeWidth="1.300" /><path d="M8 12v2M4 14.500h8" stroke="#ddd" /></>,
    r: <><circle cx="8" cy="8" r="8" fill="#6f9fd0" /><path d="M5.500 12V4.500H9a2 2 0 010 4H6M9 8.500l2 3.500" stroke="#fff" strokeWidth="1.200" /></>,
    ppt: <><path d="M8 2h8v12H8z" fill="#fff" stroke="#d24726" /><path d="M11 5h4M11 8h4M11 11h4" stroke="#d24726" strokeWidth="1.500" /><path d="M0 1.500L10 0v16L0 14.500z" fill="#d24726" /><path d="M3.500 12V5H6a2 2 0 010 4.200H4" stroke="#fff" strokeWidth="1.400" /></>,
  };
  return <svg width="16" height="16" viewBox="0 0 16 16" fill="none">{art[k]}</svg>;
}

const apps = ["folder+", "books", "paw+", "firefox", "vivaldi", "ubuntu", "mdoc", "owl", "gem", "house", "calc", "zred", "shield", "word*", "zeta", "tdoc+", "crystal", "code+", "brackets", "funnel", "win", "doc", "cam", "teams", "cloud", "mask", "win", "monitor", "r", "vivaldi+", "ppt+"];

function Taskbar() {
  return (
    <div className="flex h-[30px] items-center bg-[#101010] text-white">
      <Svg w={17} h={16} className="ml-[9px]"><path d="M0 2l7-1v6.500H0zM8 1l9-1v7.500H8zM0 8.500h7V15l-7-1zM8 8.500h9V16l-9-1z" fill="#fff" /></Svg>
      <Svg w={16} h={16} className="ml-[20px]"><circle cx="10" cy="6" r="5" stroke="#eee" strokeWidth="1.400" /><path d="M6.500 9.500L1 15" stroke="#eee" strokeWidth="1.400" /></Svg>
      <div className="ml-[12px] flex">
        {apps.map((a, i) => {
          const active = a.endsWith("*"), run = a.endsWith("+");
          return (
            <div key={i} className={"flex h-[30px] w-[37px] flex-col items-center pt-[7px] " + (active ? "bg-[#333]" : "")}>
              <AppIcon k={a.replace(/[+*]/, "")} />
              <div className={"mt-[5px] h-[2px] " + (active ? "w-[36px] bg-[#f792cf]" : run ? "w-[28px] bg-[#f792cf]" : "w-0")} />
            </div>
          );
        })}
      </div>
      <Svg w={11} h={7} className="ml-[517px]"><path d="M1 6l4.500-5L10 6" stroke="#fff" strokeWidth="1.200" /></Svg>
      <Svg w={17} h={13} className="ml-[11px]"><path d="M5.500 3.500h9v8h-9zM15 6v3M2 0v3M5 0v3M1 3h5v2L4 7H3L1 5zM3.500 7v5H5" stroke="#fff" /><path d="M8 5h5v5H8z" fill="#fff" /></Svg>
      <Svg w={13} h={13} className="ml-[10px]"><path d="M1 12A11 11 0 0112 1M4 12a8 8 0 018-8M7 12a5 5 0 015-5" stroke="#ccc" strokeWidth="1.100" /><circle cx="11" cy="11.500" r="1.500" fill="#fff" /></Svg>
      <Svg w={16} h={13} className="ml-[8px]"><path d="M.5 4.500H3L6.500 1v11L3 8.500H.5zM8.500 4.500a3 3 0 010 4M10.500 2.500a5 5 0 010 8M12.500 1a8 8 0 010 11" stroke="#fff" /></Svg>
      <Fit className="ml-[10px] w-[27px] text-[12px]">20:21</Fit>
      <Svg w={16} h={16} className="ml-[18px]"><path d="M0 1h16v11h-5l-3 4v-4H0z" fill="#fff" /><path d="M3 4h10M3 6.500h10M3 9h7" stroke="#101010" /></Svg>
      <div className="ml-[19px] h-[30px] w-px bg-[#555]" />
    </div>
  );
}

export default function App() {
  return (
    <div className="flex h-[1080px] w-[1920px] flex-col overflow-hidden bg-[#e6e6e6] font-['Open_Sans','Noto_Sans',sans-serif] text-[12px] leading-[16px]">
      <Header />
      <Ribbon />
      <div className="flex h-[871px]">
        <Navigation />
        <div className="flex flex-1 flex-col">
          <div className="flex h-[24px]">
            <div className="flex h-[21px] w-[22px] shrink-0 items-center justify-center bg-[#d9d9d9]">
              <div className="flex h-[15px] w-[15px] items-center justify-center bg-white"><div className="h-[6px] w-[6px] border-b-2 border-l-2 border-[#555]" /></div>
            </div>
            <div className="-ml-[238px]"><Ruler /></div>
          </div>
          <Documents />
        </div>
      </div>
      <StatusBar />
      <Taskbar />
    </div>
  );
}
